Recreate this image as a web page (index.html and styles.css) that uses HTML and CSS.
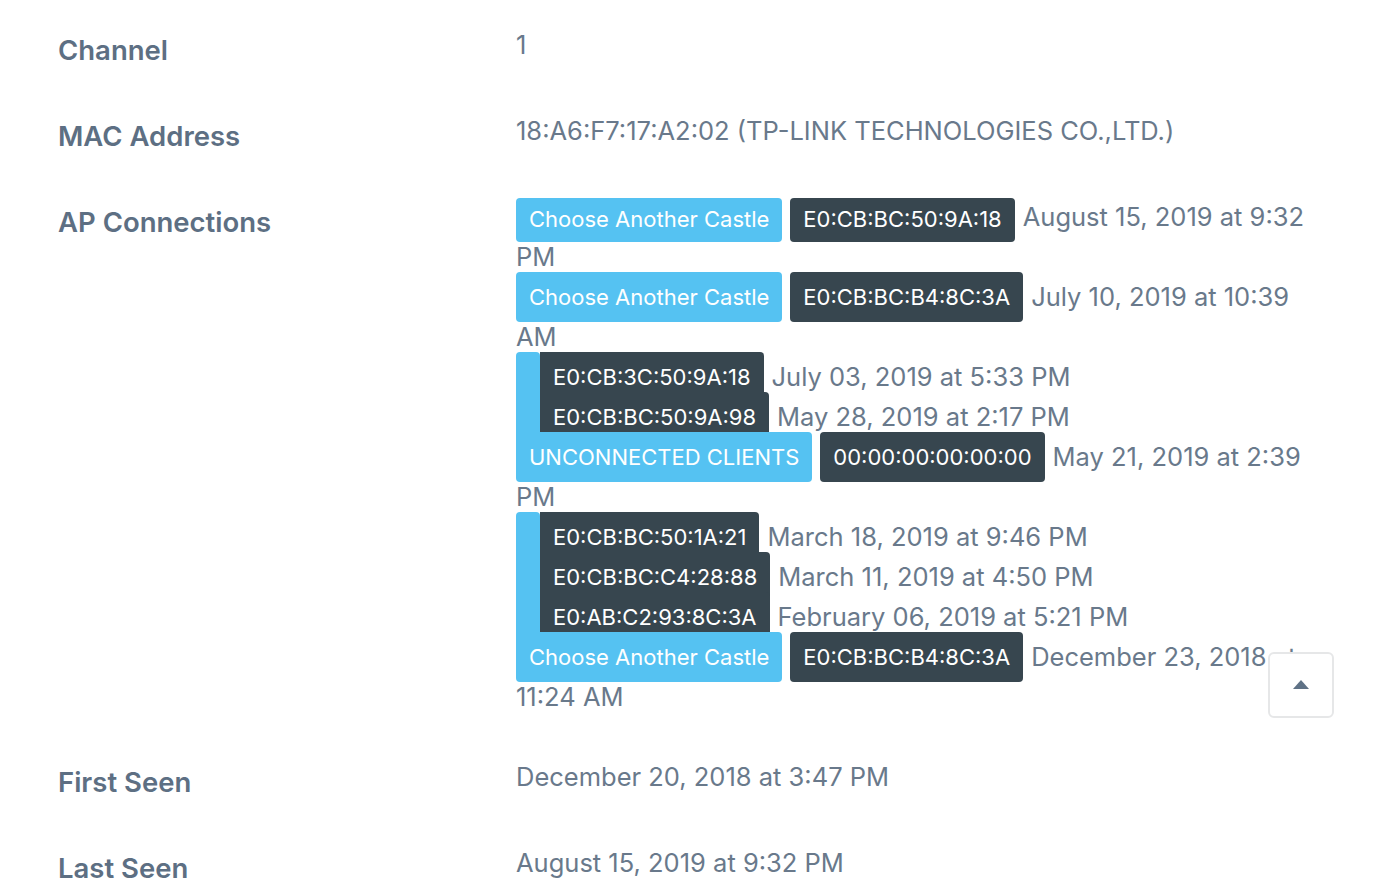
FILE: index.html
```html
<!DOCTYPE html>
<html lang="en">
<head>
<meta charset="utf-8">
<title>Client details</title>
<link rel="stylesheet" href="styles.css">
</head>
<body>
<main class="details">
  <div class="row">
    <div class="label">Channel</div>
    <div class="value"><div class="line">1</div></div>
  </div>
  <div class="row">
    <div class="label">MAC Address</div>
    <div class="value"><div class="line">18:A6:F7:17:A2:02 (TP-LINK TECHNOLOGIES CO.,LTD.)</div></div>
  </div>
  <div class="row row-ap">
    <div class="label">AP Connections</div>
    <div class="value">
      <div class="line"><span class="tag info first">Choose Another Castle</span><span class="tag dark first">E0:CB:BC:50:9A:18</span>August 15, 2019 at 9:32 PM</div>
      <div class="line"><span class="tag info">Choose Another Castle</span><span class="tag dark">E0:CB:BC:B4:8C:3A</span>July 10, 2019 at 10:39 AM</div>
      <div class="group">
        <div class="nested">
          <span class="strip"></span>
          <div class="nested-lines">
            <div class="line"><span class="tag dark flat">E0:CB:3C:50:9A:18</span>July 03, 2019 at 5:33 PM</div>
            <div class="line"><span class="tag dark flat">E0:CB:BC:50:9A:98</span>May 28, 2019 at 2:17 PM</div>
          </div>
        </div>
        <div class="line"><span class="tag info joined">UNCONNECTED CLIENTS</span><span class="tag dark">00:00:00:00:00:00</span>May 21, 2019 at 2:39 PM</div>
      </div>
      <div class="group">
        <div class="nested">
          <span class="strip"></span>
          <div class="nested-lines">
            <div class="line"><span class="tag dark flat">E0:CB:BC:50:1A:21</span>March 18, 2019 at 9:46 PM</div>
            <div class="line"><span class="tag dark flat">E0:CB:BC:C4:28:88</span>March 11, 2019 at 4:50 PM</div>
            <div class="line"><span class="tag dark flat">E0:AB:C2:93:8C:3A</span>February 06, 2019 at 5:21 PM</div>
          </div>
        </div>
        <div class="line"><span class="tag info joined">Choose Another Castle</span><span class="tag dark">E0:CB:BC:B4:8C:3A</span>December 23, 2018 at 11:24 AM</div>
      </div>
    </div>
  </div>
  <div class="row">
    <div class="label">First Seen</div>
    <div class="value"><div class="line">December 20, 2018 at 3:47 PM</div></div>
  </div>
  <div class="row">
    <div class="label">Last Seen</div>
    <div class="value"><div class="line">August 15, 2019 at 9:32 PM</div></div>
  </div>
</main>
<button class="to-top" type="button" aria-label="Back to top">
  <svg width="16" height="9" viewBox="0 0 16 9"><path d="M8 0 L16 9 L0 9 Z" fill="#5f7286"/></svg>
</button>
</body>
</html>
```
FILE: styles.css
```css
html, body {
  margin: 0;
  padding: 0;
  background: #ffffff;
}
body {
  font-family: Inter, "Noto Sans", "Liberation Sans", sans-serif;
  color: #69798b;
  overflow: hidden;
}
.details {
  width: 1280px;
  margin: 0 auto;
  padding-top: 2px;
}
.row {
  display: grid;
  grid-template-columns: 459px 1fr;
  align-items: start;
  padding: 23px 0;
}
.row-ap {
  padding-bottom: 17px;
}
.label {
  font-size: 27.5px;
  font-weight: 600;
  line-height: 40px;
  padding-top: 5px;
  margin-bottom: -5px;
  padding-left: 1px;
  color: #5d6f83;
}
.value {
  font-size: 25.5px;
  line-height: 40px;
  padding-right: 17px;
}
.line {
  line-height: 40px;
  min-height: 40px;
}
.tag {
  display: inline-block;
  vertical-align: top;
  height: 50px;
  line-height: 50px;
  margin: -5px 8px -5px 0;
  padding: 0 13px;
  border-radius: 4px;
  font-size: 22px;
  color: #ffffff;
  white-space: nowrap;
}
.tag.first {
  height: 44px;
  line-height: 42px;
  margin-top: 1px;
  margin-bottom: -5px;
}
.info {
  background: #55c2f2;
}
.dark {
  background: #37464f;
}
.flat {
  border-top-left-radius: 0;
  border-bottom-left-radius: 0;
}
.joined {
  border-top-left-radius: 0;
}
.nested {
  display: flex;
}
.strip {
  flex: 0 0 24px;
  background: #55c2f2;
  border-radius: 4px 4px 0 0;
  margin-top: -5px;
  margin-bottom: 5px;
}
.nested-lines {
  flex: 1;
  min-width: 0;
}
.to-top {
  position: fixed;
  right: 60px;
  bottom: 172px;
  width: 66px;
  height: 66px;
  background: #ffffff;
  border: 2px solid #e6e7e8;
  border-radius: 6px;
  padding: 0;
  display: flex;
  align-items: center;
  justify-content: center;
  cursor: pointer;
}
.to-top svg {
  display: block;
  margin-top: -1px;
}
```
